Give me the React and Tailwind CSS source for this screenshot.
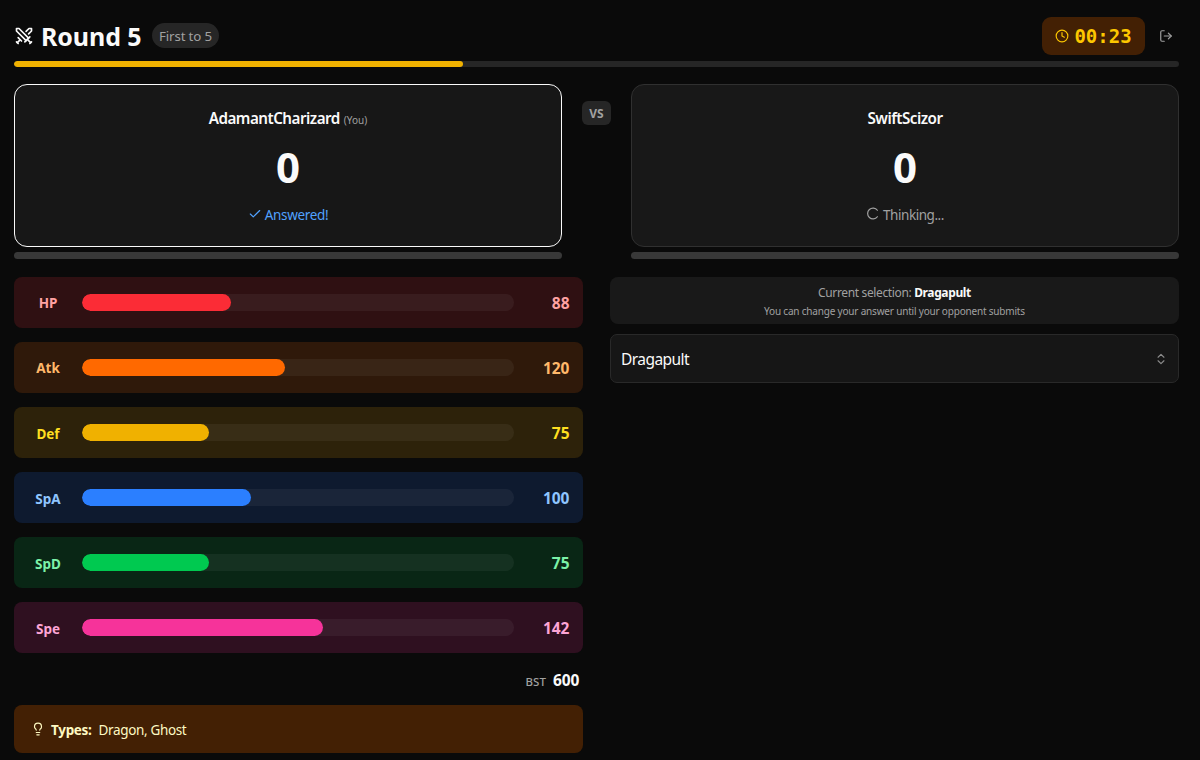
import React from "react";
import { Swords, Clock, LogOut, Check, ChevronsUpDown, Lightbulb } from "lucide-react";

const stats = [
  { name: "HP", value: 88, row: "bg-[#2f1012]", fill: "bg-[#fb2c36]", text: "text-[#ffa2a2]" },
  { name: "Atk", value: 120, row: "bg-[#2f190a]", fill: "bg-[#ff6900]", text: "text-[#ffb86a]" },
  { name: "Def", value: 75, row: "bg-[#2d220a]", fill: "bg-[#f0b100]", text: "text-[#ffdf20]" },
  { name: "SpA", value: 100, row: "bg-[#0e1a2f]", fill: "bg-[#2b7fff]", text: "text-[#8ec5ff]" },
  { name: "SpD", value: 75, row: "bg-[#092615]", fill: "bg-[#00c950]", text: "text-[#7bf1a8]" },
  { name: "Spe", value: 142, row: "bg-[#2f1020]", fill: "bg-[#f6339a]", text: "text-[#fda5d5]" },
];

function StatRow({ stat }) {
  return (
    <div className={`flex h-[51px] items-center rounded-[8px] pr-[13px] ${stat.row}`}>
      <div className={`w-[68px] pt-[3px] text-center text-[13.5px] font-bold ${stat.text}`}>{stat.name}</div>
      <div className="h-[17px] w-[432px] overflow-hidden rounded-full bg-white/5">
        <div className={`h-full rounded-full ${stat.fill}`} style={{ width: `${(stat.value / 255) * 100}%` }} />
      </div>
      <div className={`flex-1 pt-[3px] text-right text-[15.5px] font-bold ${stat.text}`}>{stat.value}</div>
    </div>
  );
}

function PlayerCard({ name, you, children }) {
  return (
    <div className="w-[548px]">
      <div className={`flex h-[163px] flex-col items-center rounded-[13px] border pt-[22px] ${you ? "border-[#fafafa] bg-[#171717]" : "border-[#303030] bg-[#181818]"}`}>
        <div className="flex h-6 items-baseline gap-1">
          <span className="text-[15.2px] font-semibold tracking-[-0.5px] text-[#fafafa]">{name}</span>
          {you && <span className="text-[10px] text-[#a1a1a1]">(You)</span>}
        </div>
        <div className="mt-[8px] flex h-[56px] items-center text-[42px] font-bold leading-none text-[#fafafa]">0</div>
        <div className="mt-[8px] flex h-6 items-center">{children}</div>
      </div>
      <div className="mt-[5px] h-[7px] rounded-full bg-[#383838]" />
    </div>
  );
}

export default function App() {
  return (
    <div className="h-[760px] w-full overflow-hidden bg-[#0a0a0a] pl-[14px] pr-[21px] pt-[17px] font-['Noto_Sans','Open_Sans',sans-serif] text-[#fafafa]">
      <header className="flex h-[38px] items-center">
        <Swords size={20} strokeWidth={2} className="mb-px" />
        <h1 className="ml-[7px] mt-px w-[100px] whitespace-nowrap text-[25px] font-bold leading-none tracking-[-0.1px]">Round 5</h1>
        <span className="ml-[11px] mb-px flex h-[25px] w-[67px] items-center justify-center whitespace-nowrap rounded-full bg-[#262626] pt-[2px] text-[13.3px] tracking-[-0.15px] text-[#a1a1a1]">First to 5</span>
        <div className="ml-auto flex h-[38px] w-[103px] items-center justify-center gap-[5px] rounded-[9px] bg-[#432004] text-[#fdc700]">
          <Clock size={14} />
          <span className="font-['DejaVu_Sans_Mono',monospace] text-[19px] font-bold leading-none">00:23</span>
        </div>
        <LogOut size={14} className="ml-[14px] mr-[6px] mb-px text-[#a1a1a1]" />
      </header>
      <div className="mt-[6px] h-[6px] overflow-hidden rounded-full bg-[#262626]">
        <div className="h-full w-[449px] rounded-full bg-[#f0b100]" />
      </div>

      <section className="mt-[17px] flex items-start justify-between">
        <PlayerCard name="AdamantCharizard" you>
          <Check size={14} className="mr-[3px] mb-[2px] text-[#51a2ff]" />
          <span className="text-[13.5px] tracking-[-0.35px] text-[#51a2ff]">Answered!</span>
        </PlayerCard>
        <div className="mt-[17px] flex h-6 w-[29px] items-center justify-center rounded-[6px] bg-[#262626] pt-px text-[12px] font-bold text-[#a1a1a1]">VS</div>
        <PlayerCard name="SwiftScizor">
          <svg viewBox="0 0 24 24" className="mr-[4px] mb-[3px] size-[13px] text-[#a1a1a1]" fill="none" stroke="currentColor" strokeWidth="2.2" strokeLinecap="round">
            <path d="M21 18a10 10 0 1 1 0-12" />
          </svg>
          <span className="text-[13.5px] tracking-[-0.45px] text-[#a1a1a1]">Thinking...</span>
        </PlayerCard>
      </section>

      <main className="mt-[17.5px] flex items-start justify-between">
        <div className="w-[568.5px]">
          <div className="flex flex-col gap-[14.1px]">
            {stats.map((stat) => (
              <StatRow key={stat.name} stat={stat} />
            ))}
          </div>
          <div className="mt-[16px] flex h-[25px] items-baseline justify-end gap-[7px] pr-[3px]">
            <span className="text-[11.5px] font-medium text-[#a1a1a1]">BST</span>
            <span className="text-[15.5px] font-bold">600</span>
          </div>
          <div className="mt-[11px] flex h-[48px] items-center rounded-[8px] bg-[#432004] pl-[17px] text-[13.5px] text-[#fef9c2]">
            <Lightbulb size={14} />
            <span className="ml-[6px] pt-[3px] font-bold tracking-[-0.3px]">Types:</span>
            <span className="ml-[7px] pt-[3px] tracking-[-0.35px]">Dragon, Ghost</span>
          </div>
        </div>

        <div className="w-[569px]">
          <div className="flex h-[47.5px] flex-col items-center rounded-[8px] bg-[#191919] pt-[6px] text-[#a1a1a1]">
            <div className="h-5 text-[12px] leading-5 tracking-[-0.36px]">
              Current selection: <span className="font-bold text-[#fafafa]">Dragapult</span>
            </div>
            <div className="h-4 text-[10px] leading-[17px] tracking-[-0.19px]">You can change your answer until your opponent submits</div>
          </div>
          <div className="mt-[10px] flex h-[49px] items-center justify-between rounded-[7px] border border-[#292929] bg-[#161616] pl-[10px] pr-[10px]">
            <span className="pt-[3px] text-[15.5px] tracking-[-0.55px]">Dragapult</span>
            <ChevronsUpDown size={14} className="text-[#8b8b8b]" />
          </div>
        </div>
      </main>
    </div>
  );
}
